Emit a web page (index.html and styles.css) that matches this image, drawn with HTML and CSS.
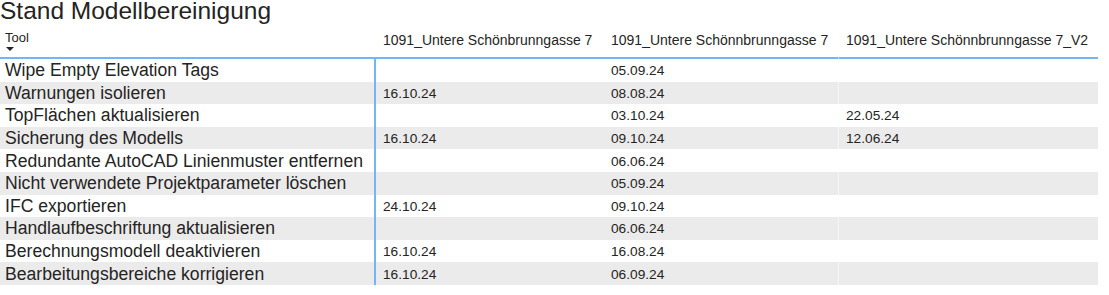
FILE: index.html
```html
<!DOCTYPE html>
<html lang="de">
<head>
<meta charset="utf-8">
<title>Stand Modellbereinigung</title>
<link rel="stylesheet" href="styles.css">
</head>
<body>
<div class="visual">
  <div class="title">Stand Modellbereinigung</div>
  <div class="table">
    <div class="hcell first"><span class="tool">Tool</span><span class="sort"></span></div>
    <div class="hcell">1091_Untere Schönbrunngasse 7</div>
    <div class="hcell">1091_Untere Schönnbrunngasse 7</div>
    <div class="hcell last">1091_Untere Schönnbrunngasse 7_V2</div>

    <div class="cell name">Wipe Empty Elevation Tags</div><div class="cell c2"></div><div class="cell">05.09.24</div><div class="cell c4"></div>
    <div class="cell name alt">Warnungen isolieren</div><div class="cell c2 alt">16.10.24</div><div class="cell alt">08.08.24</div><div class="cell c4 alt"></div>
    <div class="cell name">TopFlächen aktualisieren</div><div class="cell c2"></div><div class="cell">03.10.24</div><div class="cell c4">22.05.24</div>
    <div class="cell name alt">Sicherung des Modells</div><div class="cell c2 alt">16.10.24</div><div class="cell alt">09.10.24</div><div class="cell c4 alt">12.06.24</div>
    <div class="cell name">Redundante AutoCAD Linienmuster entfernen</div><div class="cell c2"></div><div class="cell">06.06.24</div><div class="cell c4"></div>
    <div class="cell name alt">Nicht verwendete Projektparameter löschen</div><div class="cell c2 alt"></div><div class="cell alt">05.09.24</div><div class="cell c4 alt"></div>
    <div class="cell name">IFC exportieren</div><div class="cell c2">24.10.24</div><div class="cell">09.10.24</div><div class="cell c4"></div>
    <div class="cell name alt">Handlaufbeschriftung aktualisieren</div><div class="cell c2 alt"></div><div class="cell alt">06.06.24</div><div class="cell c4 alt"></div>
    <div class="cell name">Berechnungsmodell deaktivieren</div><div class="cell c2">16.10.24</div><div class="cell">16.08.24</div><div class="cell c4"></div>
    <div class="cell name alt">Bearbeitungsbereiche korrigieren</div><div class="cell c2 alt">16.10.24</div><div class="cell alt">06.09.24</div><div class="cell c4 alt"></div>
  </div>
</div>
</body>
</html>
```

FILE: styles.css
```css
html, body {
  margin: 0;
  padding: 0;
  background: #ffffff;
}
body {
  font-family: "Liberation Sans", Arial, sans-serif;
  color: #252423;
  width: 1109px;
  height: 295px;
  overflow: hidden;
}
.visual {
  display: flex;
  flex-direction: column;
}
.title {
  font-size: 24.5px;
  line-height: 22px;
  height: 22px;
  color: #252423;
  white-space: nowrap;
}
.table {
  display: grid;
  grid-template-columns: 374px 228px 236px 260px;
  grid-auto-rows: 22.6px;
  grid-template-rows: 37px;
}
.hcell {
  font-size: 14px;
  border-bottom: 2px solid #72b6f4;
  display: flex;
  align-items: center;
  padding-left: 9px;
  padding-top: 1px;
  box-sizing: border-box;
  white-space: nowrap;
  color: #252423;
}
.hcell.first {
  padding-left: 5px;
  flex-direction: column;
  align-items: flex-start;
  justify-content: flex-end;
  padding-bottom: 6px;
}
.tool {
  font-size: 13px;
  line-height: 13px;
}
.hcell.last {
  border-left: 1px solid #ffffff;
  padding-left: 7px;
}
.sort {
  width: 0;
  height: 0;
  border-left: 4px solid transparent;
  border-right: 4px solid transparent;
  border-top: 4px solid #252423;
  margin-top: 3px;
  margin-left: 1px;
}
.cell {
  font-size: 13.7px;
  display: flex;
  align-items: center;
  padding-left: 9px;
  box-sizing: border-box;
  white-space: nowrap;
  padding-top: 1px;
}
.cell.name {
  font-size: 17.6px;
  padding-left: 5px;
}
.cell.c2 {
  border-left: 2px solid #72b6f4;
  padding-left: 7px;
}
.cell.c4 {
  border-left: 1px solid #ffffff;
  padding-left: 7px;
}
.cell.alt {
  background: #ebebeb;
}
.cell.c4.alt {
  border-left-color: #f6f6f6;
}
```
